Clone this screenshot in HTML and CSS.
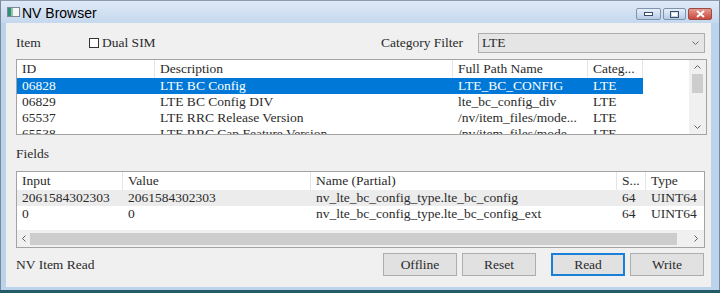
FILE: index.html
```html
<!DOCTYPE html>
<html lang="en">
<head>
    <meta charset="UTF-8">
    <meta name="viewport" content="width=device-width, initial-scale=1.0">
    <title>NV Browser</title>
    <link rel="stylesheet" href="styles.css">
</head>
<body>
    <div class="window">
        <div class="titlebar">
            <svg class="app-icon" width="13" height="10" viewBox="0 0 13 10">
                <rect x="0.5" y="0.5" width="12" height="9" fill="#f4f6f8" stroke="#7d8894"/>
                <rect x="1" y="1" width="3" height="8" fill="#2f8f7a"/>
                <rect x="4" y="1" width="2" height="8" fill="#8fc6a8"/>
            </svg>
            <span class="title">NV Browser</span>
            <div class="caption-buttons">
                <div class="cap-btn cap-min">
                    <svg width="9" height="4" viewBox="0 0 9 4"><rect x="0.5" y="0.5" width="8" height="3" fill="#fff" stroke="#3b4e66"/></svg>
                </div>
                <div class="cap-btn cap-max">
                    <svg width="9" height="7" viewBox="0 0 9 7"><rect x="0.5" y="0.5" width="8" height="6" fill="none" stroke="#3b4e66"/><rect x="2" y="2" width="5" height="3" fill="#fff"/></svg>
                </div>
                <div class="cap-btn cap-close">
                    <svg width="9" height="8" viewBox="0 0 9 8"><path d="M1 1 L8 7 M8 1 L1 7" stroke="#fff" stroke-width="2"/></svg>
                </div>
            </div>
        </div>

        <div class="client">
            <div class="top-row">
                <span class="item-label">Item</span>
                <span class="check"><span class="check-box"></span>Dual SIM</span>
                <span class="filter-label">Category Filter</span>
                <div class="combo">
                    <span>LTE</span>
                    <svg width="7" height="4" viewBox="0 0 7 4"><polyline points="0.5,0.5 3.5,3.5 6.5,0.5" fill="none" stroke="#6a6a6a"/></svg>
                </div>
            </div>

            <div class="listview items">
                <div class="lv-body">
                    <div class="lv-row lv-head">
                        <div class="cell c-id">ID</div>
                        <div class="cell c-desc">Description</div>
                        <div class="cell c-path">Full Path Name</div>
                        <div class="cell c-cat">Categ...</div>
                    </div>
                    <div class="lv-row selected">
                        <div class="cell c-id">06828</div>
                        <div class="cell c-desc">LTE BC Config</div>
                        <div class="cell c-path">LTE_BC_CONFIG</div>
                        <div class="cell c-cat">LTE</div>
                    </div>
                    <div class="lv-row">
                        <div class="cell c-id">06829</div>
                        <div class="cell c-desc">LTE BC Config DIV</div>
                        <div class="cell c-path">lte_bc_config_div</div>
                        <div class="cell c-cat">LTE</div>
                    </div>
                    <div class="lv-row">
                        <div class="cell c-id">65537</div>
                        <div class="cell c-desc">LTE RRC Release Version</div>
                        <div class="cell c-path">/nv/item_files/mode...</div>
                        <div class="cell c-cat">LTE</div>
                    </div>
                    <div class="lv-row">
                        <div class="cell c-id">65538</div>
                        <div class="cell c-desc">LTE RRC Cap Feature Version</div>
                        <div class="cell c-path">/nv/item_files/mode...</div>
                        <div class="cell c-cat">LTE</div>
                    </div>
                </div>
                <div class="vscroll">
                    <div class="sb-arrow">
                        <svg width="7" height="4" viewBox="0 0 7 4"><polyline points="0.5,3.5 3.5,0.5 6.5,3.5" fill="none" stroke="#606060"/></svg>
                    </div>
                    <div class="v-thumb"></div>
                    <div class="sb-space"></div>
                    <div class="sb-arrow">
                        <svg width="7" height="4" viewBox="0 0 7 4"><polyline points="0.5,0.5 3.5,3.5 6.5,0.5" fill="none" stroke="#606060"/></svg>
                    </div>
                </div>
            </div>

            <div class="section-label">Fields</div>

            <div class="listview fields">
                <div class="lv-body">
                    <div class="lv-row lv-head">
                        <div class="cell f-input">Input</div>
                        <div class="cell f-value">Value</div>
                        <div class="cell f-name">Name (Partial)</div>
                        <div class="cell f-size">S...</div>
                        <div class="cell f-type">Type</div>
                    </div>
                    <div class="lv-row shaded">
                        <div class="cell f-input">2061584302303</div>
                        <div class="cell f-value">2061584302303</div>
                        <div class="cell f-name">nv_lte_bc_config_type.lte_bc_config</div>
                        <div class="cell f-size">64</div>
                        <div class="cell f-type">UINT64</div>
                    </div>
                    <div class="lv-row">
                        <div class="cell f-input">0</div>
                        <div class="cell f-value">0</div>
                        <div class="cell f-name">nv_lte_bc_config_type.lte_bc_config_ext</div>
                        <div class="cell f-size">64</div>
                        <div class="cell f-type">UINT64</div>
                    </div>
                </div>
                <div class="hscroll">
                    <div class="sb-arrow left">
                        <svg width="4" height="7" viewBox="0 0 4 7"><polyline points="3.5,0.5 0.5,3.5 3.5,6.5" fill="none" stroke="#606060"/></svg>
                    </div>
                    <div class="h-thumb"></div>
                    <div class="sb-arrow right">
                        <svg width="4" height="7" viewBox="0 0 4 7"><polyline points="0.5,0.5 3.5,3.5 0.5,6.5" fill="none" stroke="#606060"/></svg>
                    </div>
                </div>
            </div>

            <div class="bottom-row">
                <span class="status">NV Item Read</span>
                <div class="buttons">
                    <button class="btn">Offline</button>
                    <button class="btn">Reset</button>
                    <button class="btn default">Read</button>
                    <button class="btn">Write</button>
                </div>
            </div>
        </div>
    </div>
</body>
</html>
```

FILE: styles.css
```css
* {
    box-sizing: border-box;
}

body {
    margin: 0;
    background-color: #235b69;
    font-family: 'Liberation Serif', 'Times New Roman', serif;
    font-size: 13.5px;
    color: #2b2b2b;
}

/* Window frame */
.window {
    width: 720px;
    height: 290px;
    background-color: #bcd3ec;
    border-top: 1px solid #8d9bab;
    border-left: 1px solid #7b8a9b;
    border-right: 1px solid #7b8a9b;
    display: flex;
    flex-direction: column;
}

.titlebar {
    height: 22px;
    flex-shrink: 0;
    display: flex;
    align-items: center;
    padding: 0 7px 0 6px;
    background: linear-gradient(#dfe9f6, #c5d8ee);
}

.app-icon {
    margin-right: 2px;
}

.title {
    font-family: 'Liberation Sans', Arial, sans-serif;
    font-size: 14px;
    color: #000;
    margin-top: 2px;
}

.caption-buttons {
    margin-left: auto;
    display: flex;
    gap: 2px;
    align-self: flex-start;
    margin-top: 7px;
}

.cap-btn {
    height: 12px;
    display: flex;
    align-items: center;
    justify-content: center;
    border: 1px solid #7f93ad;
    border-radius: 2px;
    background: linear-gradient(#e6eef8, #b8cce6);
}

.cap-min {
    width: 25px;
}

.cap-max {
    width: 23px;
}

.cap-close {
    width: 24px;
    border-color: #9c4a44;
    background: linear-gradient(#e49a8f, #c9473c);
}

/* Client area */
.client {
    margin: 0 8px 0 5px;
    height: 264px;
    background-color: #f0f0f0;
    padding: 10px 4px 0 10px;
    display: flex;
    flex-direction: column;
}

.top-row {
    height: 20px;
    display: flex;
    align-items: center;
}

.item-label {
    width: 73px;
}

.check {
    display: flex;
    align-items: center;
    gap: 3px;
}

.check-box {
    width: 10px;
    height: 10px;
    border: 1px solid #333;
    background-color: #fff;
}

.filter-label {
    margin-left: auto;
    margin-right: 15px;
}

.combo {
    width: 227px;
    height: 20px;
    margin-right: 2px;
    border: 1px solid #adadad;
    background-color: #e5e5e5;
    display: flex;
    align-items: center;
    justify-content: space-between;
    padding: 0 5px 0 3px;
}

/* List views */
.listview {
    display: flex;
    border: 1px solid #a3a3a3;
    background-color: #fff;
    overflow: hidden;
}

.listview.items {
    height: 76px;
    margin-top: 6px;
}

.listview.fields {
    height: 77px;
    margin-right: 2px;
    flex-direction: column;
}

.lv-body {
    flex: 1;
    overflow: hidden;
}

.lv-row {
    display: flex;
    width: max-content;
    height: 16px;
    line-height: 16px;
    white-space: nowrap;
}

.lv-head {
    height: 18px;
    line-height: 18px;
}

.lv-head .cell {
    border-right: 1px solid #e5e5e5;
}

.cell {
    flex-shrink: 0;
    overflow: hidden;
    padding-left: 5px;
}

.lv-row.selected {
    background-color: #0078d7;
    color: #fff;
}

.lv-row.shaded {
    background-color: #ececec;
}

.c-id { width: 138px; }
.c-desc { width: 298px; }
.c-path { width: 135px; }
.c-cat { width: 55px; }

.f-input { width: 106px; }
.f-value { width: 188px; }
.f-name { width: 306px; }
.f-size { width: 29px; }
.f-type { width: 80px; }

/* Scroll bars */
.vscroll {
    width: 17px;
    flex-shrink: 0;
    background-color: #f0f0f0;
    display: flex;
    flex-direction: column;
}

.sb-arrow {
    display: flex;
    align-items: center;
    justify-content: center;
    flex-shrink: 0;
}

.vscroll .sb-arrow {
    height: 14px;
}

.v-thumb {
    height: 19px;
    margin: 0 3px;
    background-color: #cdcdcd;
}

.sb-space {
    flex: 1;
}

.hscroll {
    height: 17px;
    flex-shrink: 0;
    display: flex;
    background-color: #f0f0f0;
}

.hscroll .sb-arrow.left {
    width: 13px;
}

.hscroll .sb-arrow.right {
    width: 17px;
}

.h-thumb {
    flex: 1;
    margin: 3px 10px 2px 0;
    background-color: #cdcdcd;
}

.section-label {
    line-height: 16px;
    margin: 11px 0 9px;
}

/* Bottom row */
.bottom-row {
    margin-top: 5px;
    display: flex;
    align-items: center;
}

.buttons {
    margin-left: auto;
    margin-right: 3px;
    display: flex;
}

.btn {
    width: 74px;
    height: 23px;
    padding: 0;
    margin-left: 5px;
    background-color: #e1e1e1;
    border: 1px solid #adadad;
    font-family: inherit;
    font-size: 13.5px;
    font-weight: normal;
    color: #2b2b2b;
}

.btn.default {
    margin-left: 15px;
    border: 2px solid #1a7fd6;
}
```
